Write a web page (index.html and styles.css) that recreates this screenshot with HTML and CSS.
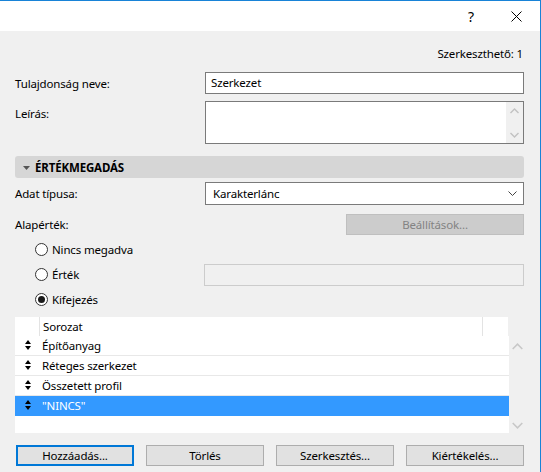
FILE: index.html
```html
<!DOCTYPE html>
<html lang="hu">
<head>
    <meta charset="UTF-8">
    <title>Tulajdonság</title>
    <link rel="stylesheet" href="styles.css">
</head>
<body>
    <div class="window">
        <div class="titlebar">
            <span class="help">?</span>
            <span class="close">
                <svg width="11" height="11" viewBox="0 0 11 11"><path d="M0.5 0.5L10.5 10.5M10.5 0.5L0.5 10.5" stroke="#000" stroke-width="1"/></svg>
            </span>
        </div>

        <div class="content">
            <div class="editable">Szerkeszthető: 1</div>

            <div class="field field-name">
                <div class="label">Tulajdonság neve:</div>
                <div class="input">Szerkezet</div>
            </div>

            <div class="field field-desc">
                <div class="label label-top">Leírás:</div>
                <div class="textarea">
                    <div class="text"></div>
                    <div class="mini-scroll">
                        <svg width="9" height="6" viewBox="0 0 9 6"><path d="M0.5 5L4.5 1L8.5 5" fill="none" stroke="#c2c2c2" stroke-width="1.4"/></svg>
                        <svg width="9" height="6" viewBox="0 0 9 6"><path d="M0.5 1L4.5 5L8.5 1" fill="none" stroke="#c2c2c2" stroke-width="1.4"/></svg>
                    </div>
                </div>
            </div>

            <div class="section">
                <svg width="7" height="4" viewBox="0 0 7 4"><path d="M0 0H7L3.5 4Z" fill="#555"/></svg>
                <span>ÉRTÉKMEGADÁS</span>
            </div>

            <div class="field field-type">
                <div class="label">Adat típusa:</div>
                <div class="select">
                    <span>Karakterlánc</span>
                    <svg width="9" height="5" viewBox="0 0 9 5"><path d="M0.5 0.5L4.5 4.5L8.5 0.5" fill="none" stroke="#444" stroke-width="1"/></svg>
                </div>
            </div>

            <div class="default-row">
                <div class="label">Alapérték:</div>
                <div class="btn btn-disabled">Beállítások...</div>
            </div>

            <div class="radios">
                <div class="radio-row">
                    <div class="radio"><span class="dot"></span>Nincs megadva</div>
                </div>
                <div class="radio-row">
                    <div class="radio"><span class="dot"></span>Érték</div>
                    <div class="input input-disabled"></div>
                </div>
                <div class="radio-row">
                    <div class="radio radio-on"><span class="dot"></span>Kifejezés</div>
                </div>
            </div>

            <div class="list">
                <div class="list-head">
                    <div class="col-handle"></div>
                    <div class="col-name">Sorozat</div>
                    <div class="col-end"></div>
                </div>
                <div class="list-side"></div>
                <div class="list-body">
                    <div class="list-row"><span class="handle"></span>Építőanyag</div>
                    <div class="list-row"><span class="handle"></span>Réteges szerkezet</div>
                    <div class="list-row"><span class="handle"></span>Összetett profil</div>
                    <div class="list-row selected"><span class="handle"></span>"NINCS"</div>
                </div>
                <div class="list-scroll">
                    <svg width="11" height="7" viewBox="0 0 11 7"><path d="M0.7 6L5.5 1.2L10.3 6" fill="none" stroke="#c8c8c8" stroke-width="1.6"/></svg>
                    <svg width="11" height="7" viewBox="0 0 11 7"><path d="M0.7 1L5.5 5.8L10.3 1" fill="none" stroke="#c8c8c8" stroke-width="1.6"/></svg>
                </div>
            </div>

            <div class="buttons">
                <div class="btn btn-default">Hozzáadás...</div>
                <div class="btn">Törlés</div>
                <div class="btn">Szerkesztés...</div>
                <div class="btn">Kiértékelés...</div>
            </div>
        </div>
    </div>
</body>
</html>
```

FILE: styles.css
```css
* {
    margin: 0;
    padding: 0;
    box-sizing: border-box;
}

body {
    font-family: "Noto Sans", "Open Sans", sans-serif;
    font-size: 11.5px;
    letter-spacing: -0.15px;
    color: #000;
    background: #f0f0f0;
}

.window {
    width: 541px;
    height: 472px;
    background: #f0f0f0;
    border-top: 1px solid #1883d7;
    border-right: 1px solid #1883d7;
    overflow: hidden;
}

.titlebar {
    height: 30px;
    background: #fff;
    display: flex;
    justify-content: flex-end;
    align-items: center;
}

.help {
    font-size: 14px;
    width: 20px;
    text-align: center;
    margin-right: 30px;
}

.close {
    width: 11px;
    height: 11px;
    display: flex;
    margin-right: 18px;
}

.content {
    padding: 15px 16px 0 15px;
}

.editable {
    text-align: right;
    height: 16px;
    line-height: 16px;
    padding-right: 1px;
}

.field {
    display: grid;
    grid-template-columns: 190px 1fr;
    align-items: center;
}

.field-name {
    margin-top: 10px;
}

.field-desc {
    margin-top: 7px;
    align-items: start;
}

.label-top {
    padding-top: 5px;
}

.input {
    height: 22px;
    border: 1px solid #7a7a7a;
    background: #fff;
    padding: 0 5px;
    line-height: 20px;
}

.input-disabled {
    width: 320px;
    border-color: #cccccc;
    background: #f0f0f0;
}

.textarea {
    height: 43px;
    border: 1px solid #7a7a7a;
    background: #fff;
    display: flex;
}

.textarea .text {
    flex: 1;
}

.mini-scroll {
    width: 17px;
    background: #f0f0f0;
    display: flex;
    flex-direction: column;
    justify-content: space-between;
    align-items: center;
    padding: 6px 0 5px;
}

.section {
    margin-top: 12px;
    height: 22px;
    background: #d6d6d6;
    border-radius: 3px;
    display: flex;
    align-items: center;
    padding-left: 8px;
    gap: 5px;
    font-weight: bold;
}

.section svg {
    margin-top: 1px;
}

.field-type {
    margin-top: 4px;
}

.select {
    height: 23px;
    border: 1px solid #7a7a7a;
    background: #fff;
    display: flex;
    align-items: center;
    justify-content: space-between;
    padding: 0 6px 0 7px;
}

.default-row {
    margin-top: 9px;
    display: flex;
    justify-content: space-between;
    align-items: center;
}

.btn {
    height: 21px;
    border: 1px solid #adadad;
    background: #e1e1e1;
    display: flex;
    align-items: center;
    justify-content: center;
}

.btn-disabled {
    width: 178px;
    background: #cccccc;
    border-color: #bfbfbf;
    color: #838383;
}

.radios {
    margin-top: 2px;
}

.radio-row {
    height: 25px;
    display: flex;
    align-items: center;
    justify-content: space-between;
}

.radio {
    display: flex;
    align-items: center;
    padding-left: 20px;
    gap: 4px;
}

.dot {
    width: 13px;
    height: 13px;
    border: 1px solid #333;
    border-radius: 50%;
    background: #fff;
    display: flex;
    align-items: center;
    justify-content: center;
}

.radio-on .dot::after {
    content: '';
    width: 7px;
    height: 7px;
    border-radius: 50%;
    background: #1a1a1a;
}

.list {
    margin-top: 5px;
    display: grid;
    grid-template-columns: 494px 16px;
}

.list-head {
    height: 19px;
    background: #fff;
    display: flex;
    width: 493px;
}

.col-handle {
    width: 25px;
    border-right: 1px solid #e3e3e3;
}

.col-name {
    flex: 1;
    padding-left: 3px;
    line-height: 19px;
    border-right: 1px solid #e3e3e3;
}

.col-end {
    width: 25px;
}

.list-body {
    height: 97px;
    background: #fff;
}

.list-row {
    height: 20px;
    border-bottom: 1px solid #e8e8e8;
    display: flex;
    align-items: center;
    padding-bottom: 1px;
}

.list-row.selected {
    background: #3399ff;
    border-bottom-color: #3399ff;
    color: #fff;
}

.handle {
    width: 27px;
    height: 10px;
    position: relative;
}

.handle::before,
.handle::after {
    content: '';
    position: absolute;
    left: 10px;
    border-left: 3px solid transparent;
    border-right: 3px solid transparent;
}

.handle::before {
    top: 0;
    border-bottom: 4px solid #000;
}

.handle::after {
    bottom: 0;
    border-top: 4px solid #000;
}

.list-scroll {
    display: flex;
    flex-direction: column;
    justify-content: space-between;
    align-items: center;
    padding: 7px 0 4px;
}

.buttons {
    margin-top: 12px;
    display: flex;
    justify-content: space-between;
    padding-left: 1px;
}

.buttons .btn {
    width: 118px;
}

.btn-default {
    border: 2px solid #0078d7;
}
```
